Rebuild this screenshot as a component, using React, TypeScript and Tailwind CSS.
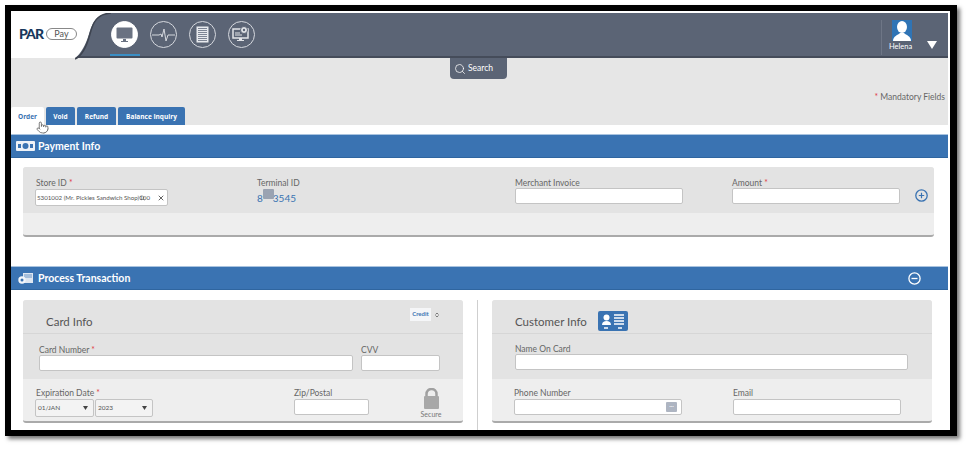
import React from 'react';
import { ChevronsUpDown, Pointer, Search, X } from 'lucide-react';

const Label: React.FC<{ text: string; required?: boolean; className?: string }> = ({ text, required, className = '' }) => (
  <div className={`text-[8.5px] leading-[11px] text-[#666] whitespace-nowrap translate-y-[1px] ${className}`}>
    {text}
    {required && <span className="text-[#e0404a]"> *</span>}
  </div>
);

const Input: React.FC<{ className?: string; children?: React.ReactNode }> = ({ className = '', children }) => (
  <div className={`h-4 bg-white border border-[#c4c4c4] rounded-[2px] flex items-center ${className}`}>{children}</div>
);

const Select: React.FC<{ text: string; className?: string }> = ({ text, className = '' }) => (
  <div className={`h-[18px] bg-[#f3f3f3] border border-[#c4c4c4] rounded-[2px] flex items-center justify-between pl-[2px] pr-[5px] text-[6.5px] text-[#555] ${className}`}>
    {text}
    <svg width="5" height="4" viewBox="0 0 5 4"><path d="M0 0h5L2.500 4z" fill="#444" /></svg>
  </div>
);

const NavCircle: React.FC<{ active?: boolean; children: React.ReactNode }> = ({ active, children }) => (
  <div className="relative w-[27px] h-[27px]">
    <div className={`w-[27px] h-[27px] rounded-full flex items-center justify-center border-[1.5px] ${active ? 'bg-white border-white' : 'border-[#d5d8de]'}`}>
      {children}
    </div>
    {active && <div className="absolute left-[-1px] top-[33px] w-[30px] h-[2px] bg-[#3a8ec4]" />}
  </div>
);

const SectionBar: React.FC<{ icon: React.ReactNode; title: string; right?: React.ReactNode }> = ({ icon, title, right }) => (
  <div className="h-6 bg-[#3a73b2] border-t border-[#a9c3df] border-b border-b-[#2f659f] flex items-center">
    <div className="w-[24px] flex justify-end">{icon}</div>
    <span className="ml-[3px] pt-[1px] text-[10.5px] font-bold text-white">{title}</span>
    {right}
  </div>
);

const App: React.FC = () => {
  return (
    <div className="w-[969px] h-[449px] bg-white pl-[5px] pt-[5px] overflow-hidden" style={{ fontFamily: 'Lato, sans-serif' }}>
      <div className="relative w-[952px] h-[431px] border-[6px] border-r-[7px] border-black bg-white overflow-hidden shadow-[3px_3px_4px_#777]">
        {/* Header */}
        <div className="mt-[2px] mr-[2px] h-[45px] flex bg-[#5b6475] border-b-2 border-[#454c5a]">
          <div className="relative z-10 w-[64px] flex items-center pl-2 gap-[3px] pb-[3px] shrink-0 -mb-[2px] bg-white">
            <span className="text-[14px] font-black tracking-[-1px] text-[#17375c] leading-none">PAR</span>
            <div className="w-[31px] h-3 bg-white border border-[#888] rounded-full text-[9px] leading-[10px] text-center text-[#555] shrink-0">Pay</div>
          </div>
          <svg width="36" height="47" viewBox="0 0 36 47" className="shrink-0 -mb-[2px]">
            <path d="M0 0H36C22 1 18 8 14 21C11 31 6 41 0 45Z" fill="#fff" />
            <path d="M0 46C7 43 12 32 15 21C18 9 22 1 36 0" fill="none" stroke="#3e4450" strokeWidth="1.500" />
          </svg>
          <div className="flex gap-3 pt-2">
            <NavCircle active>
              <svg width="17" height="16" viewBox="0 0 17 16"><rect x="0.5" y="0.5" width="16" height="11" rx="1" fill="#6a7282" /><path d="M7 12h3v2h2v1H5v-1h2z" fill="#6a7282" /></svg>
            </NavCircle>
            <NavCircle>
              <svg width="23" height="14" viewBox="0 0 23 14"><path d="M0 7h7l2 -1 1 3 2 -8 2 12 2-6h7" fill="none" stroke="#d5d8de" strokeWidth="1" /></svg>
            </NavCircle>
            <NavCircle>
              <svg width="13" height="17" viewBox="0 0 13 17"><rect x="0.5" y="0.5" width="12" height="16" fill="#e8eaee" /><path d="M2 2.500h9M2 4.500h9M2 6.500h9M2 8.500h9M2 10.500h9M2 12.500h9M2 14.500h9" stroke="#7d8594" strokeWidth="1" /></svg>
            </NavCircle>
            <NavCircle>
              <svg width="19" height="17" viewBox="0 0 19 17"><rect x="1" y="3" width="15" height="9" fill="none" stroke="#e2e4e8" strokeWidth="1.500" /><circle cx="12" cy="4" r="3.500" fill="#e2e4e8" stroke="#5b6475" /><circle cx="12" cy="4" r="1.200" fill="#5b6475" /><path d="M7 12h3v2h2v1H5v-1h2z" fill="#e2e4e8" /><path d="M3 7h5M3 9h7" stroke="#e2e4e8" /></svg>
            </NavCircle>
          </div>
          <div className="ml-auto flex pr-[11px]">
            <div className="w-px h-[35px] mt-[7px] bg-[#6e7686]" />
            <div className="w-[35px] pl-[7px] pt-[7px] flex flex-col items-start">
              <div className="w-5 h-[21px] ml-[3px] bg-[#2f74b5] overflow-hidden flex justify-center">
                <svg width="20" height="21" viewBox="0 0 20 21"><ellipse cx="10" cy="7" rx="5" ry="6" fill="#fff" /><path d="M1 21c0-5 5-6 7-8h4c2 2 7 3 7 8z" fill="#fff" /></svg>
              </div>
              <div className="mt-[1px] text-[7.5px] leading-[10px] text-white">Helena</div>
            </div>
            <div className="w-[20px] pl-[10px] pt-7">
              <svg width="10" height="8" viewBox="0 0 10 8"><path d="M0 0h10L5 8z" fill="#fff" /></svg>
            </div>
          </div>
        </div>

        {/* Search & mandatory */}
        <div className="mr-[2px] h-[67px] bg-[#e6e6e6] flex flex-col">
          <div className="ml-[439px] w-[57px] h-[21px] bg-[#5b6475] rounded-b-[4px] flex items-center pl-1 gap-[2px] text-[8.5px] text-white">
            <Search size={12} strokeWidth={1.5} />
            Search
          </div>
          <div className="mt-3 pr-[3px] text-right text-[8.5px] leading-[12px] text-[#666]">
            <span className="text-[#e0404a]">* </span>Mandatory Fields
          </div>
          {/* Tabs */}
          <div className="mt-auto h-[18px] flex gap-[2px] text-[6.5px] font-bold leading-[19px] text-white" style={{ fontFamily: '"Open Sans", sans-serif' }}>
            <div className="w-[33px] bg-white text-[#3a73b2] text-center rounded-t-[2px]">Order</div>
            <div className="w-[29px] bg-[#3a73b2] text-center rounded-t-[2px]">Void</div>
            <div className="w-[39px] bg-[#3a73b2] text-center rounded-t-[2px]">Refund</div>
            <div className="w-[67px] bg-[#3a73b2] text-center rounded-t-[2px]">Balance Inquiry</div>
          </div>
        </div>
        <div className="h-[9px]" />
        <Pointer size={13} strokeWidth={1.3} className="absolute left-[25px] top-[110px] text-[#444] fill-white" />

        {/* Payment Info */}
        <div className="mr-[2px]">
          <SectionBar
            title="Payment Info"
            icon={
              <svg width="19" height="10" viewBox="0 0 19 10"><rect width="19" height="10" rx="1" fill="#eef2f7" /><circle cx="9.500" cy="5" r="3" fill="#3a73b2" /><rect x="2" y="3" width="3" height="4" fill="#3a73b2" /><rect x="14" y="3" width="3" height="4" fill="#3a73b2" /></svg>
            }
          />
          <div className="h-[108px] pt-[9px] px-3">
            <div className="w-[911px] h-[70px] rounded-[3px] bg-[#eeeeee] border-b-2 border-[#aaa] overflow-hidden">
              <div className="h-[46px] bg-[#e3e3e3] flex pl-3 pt-[10px]">
                <div className="w-[222px]">
                  <Label text="Store ID" required className="ml-[1px]" />
                  <div className="relative w-[133px] h-[17px] mt-[1px] bg-white border border-[#c4c4c4] rounded-[2px] flex items-center justify-between pr-[2px] text-[6.2px] text-[#555] whitespace-nowrap">
                    <span className="pl-[1px]">5301002 (Mr. Pickles Sandwich Shop)100</span>
                    <X size={8} strokeWidth={2.5} className="text-[#444]" />
                    <Search size={6} className="absolute left-[103px] top-[5px] text-[#555]" />
                  </div>
                </div>
                <div className="w-[258px]">
                  <Label text="Terminal ID" />
                  <div className="relative mt-[3px] w-fit text-[10px] leading-[14px] text-[#3a73b2]">
                    8<span className="inline-block w-[10px]" />3545
                    <div className="absolute left-[6px] top-[-2px] w-[11px] h-[10px] bg-[#9aa3b2] rounded-[1px]" />
                  </div>
                </div>
                <div className="w-[217px]">
                  <Label text="Merchant Invoice" />
                  <Input className="w-[168px]" />
                </div>
                <div className="w-[183px]">
                  <Label text="Amount" required />
                  <Input className="w-[168px]" />
                </div>
                <svg width="13" height="13" viewBox="0 0 13 13" className="mt-[12px]"><circle cx="6.500" cy="6.500" r="5.700" fill="none" stroke="#3a73b2" strokeWidth="1.300" /><path d="M6.500 3.800v5.400M3.800 6.500h5.400" stroke="#3a73b2" strokeWidth="1.200" /></svg>
              </div>
            </div>
          </div>

          {/* Process Transaction */}
          <SectionBar
            title="Process Transaction"
            icon={
              <svg width="15" height="11" viewBox="0 0 15 11" className="mr-[2px]"><rect x="5" y="0" width="10" height="10" fill="#dfe7f1" /><path d="M6 2h8M6 4h8" stroke="#3a73b2" strokeWidth="0.7" /><circle cx="4" cy="7" r="3.700" fill="#f3f6fa" /><circle cx="4" cy="7" r="1.500" fill="#3a73b2" /></svg>
            }
            right={
              <svg width="13" height="13" viewBox="0 0 13 13" className="ml-auto mr-[27px]"><circle cx="6.500" cy="6.500" r="5.600" fill="none" stroke="#fff" strokeWidth="1.300" /><path d="M3.500 6.500h6" stroke="#fff" strokeWidth="1.300" /></svg>
            }
          />
          <div className="flex pl-3 pt-[10px]">
            {/* Card Info */}
            <div className="w-[440px] h-[123px] rounded-[3px] bg-[#eeeeee] border-b-2 border-[#aaa] overflow-hidden shrink-0">
              <div className="h-[34px] bg-[#e3e3e3] border-b border-[#d6d6d6] flex pl-[23px] pt-[13px] relative">
                <span className="text-[11.5px] leading-[18px] text-[#555]">Card Info</span>
                <div className="absolute left-[387px] top-[8px] flex items-center gap-[3px]">
                  <div className="w-[21px] h-[13px] bg-[#f5f6f8] text-[6px] leading-[12px] font-bold text-center text-[#3a73b2]">Credit</div>
                  <ChevronsUpDown size={6} strokeWidth={3} className="text-[#555]" />
                </div>
              </div>
              <div className="h-[45px] bg-[#e3e3e3] flex pl-4 pt-[10px]">
                <div className="w-[322px]">
                  <Label text="Card Number" required />
                  <Input className="w-[314px]" />
                </div>
                <div>
                  <Label text="CVV" />
                  <Input className="w-[79px]" />
                </div>
              </div>
              <div className="flex pl-3 pt-2">
                <div className="w-[259px]">
                  <Label text="Expiration Date" required className="ml-[1px]" />
                  <div className="flex gap-[1px] mt-[1px]">
                    <Select text="01/JAN" className="w-[59px]" />
                    <Select text="2023" className="w-[58px]" />
                  </div>
                </div>
                <div className="w-[127px]">
                  <Label text="Zip/Postal" />
                  <Input className="w-[75px] mt-[1px]" />
                </div>
                <div className="w-[20px] flex flex-col items-center pt-[1px]">
                  <svg width="17" height="21" viewBox="0 0 17 21"><path d="M3.500 9V6a5 5 0 0 1 10 0v3" fill="none" stroke="#a0a0a0" strokeWidth="2.500" /><rect x="1" y="8" width="15" height="13" rx="1" fill="#a8a8a8" /></svg>
                  <div className="text-[7px] leading-[8px] mt-[1px] text-[#777]">Secure</div>
                </div>
              </div>
            </div>

            <div className="w-px h-[131px] ml-[14px] mr-[14px] bg-[#cfcfcf] shrink-0" />

            {/* Customer Info */}
            <div className="w-[440px] h-[123px] rounded-[3px] bg-[#eeeeee] border-b-2 border-[#aaa] overflow-hidden shrink-0">
              <div className="h-[34px] bg-[#e3e3e3] border-b border-[#d6d6d6] flex pl-[23px] pt-[11px] gap-[11px]">
                <span className="text-[11.5px] leading-[22px] text-[#555]">Customer Info</span>
                <svg width="30" height="20" viewBox="0 0 30 20"><rect width="30" height="20" rx="2" fill="#3a73b2" /><circle cx="8.500" cy="6.500" r="3" fill="#fff" /><path d="M4 14c0-3 2-4 4.500-4s4.500 1 4.500 4z" fill="#fff" /><path d="M16 4h10M16 7h10M16 10h10M16 13h10" stroke="#fff" strokeWidth="1.500" /><path d="M6 17h4M20 17h4" stroke="#fff" strokeWidth="1.500" /></svg>
              </div>
              <div className="h-[45px] bg-[#e3e3e3] pl-[23px] pt-[9px]">
                <Label text="Name On Card" />
                <Input className="w-[393px]" />
              </div>
              <div className="flex pl-[22px] pt-2">
                <div className="w-[219px]">
                  <Label text="Phone Number" />
                  <Input className="w-[168px] mt-[1px] justify-end pr-[4px]">
                    <div className="w-[11px] h-[10px] bg-[#aeb5c2] rounded-[1px] text-[6px] leading-[8px] text-center text-white">···</div>
                  </Input>
                </div>
                <div>
                  <Label text="Email" />
                  <Input className="w-[168px] mt-[1px]" />
                </div>
              </div>
            </div>
          </div>
        </div>
      </div>
    </div>
  );
};

export default App;
